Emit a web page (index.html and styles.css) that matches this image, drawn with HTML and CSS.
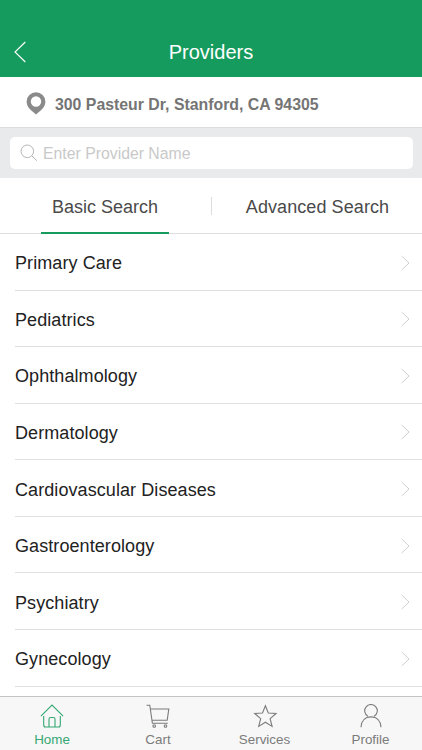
FILE: index.html
```html
<!DOCTYPE html>
<html lang="en">
<head>
<meta charset="utf-8">
<title>Providers</title>
<link rel="stylesheet" href="styles.css">
</head>
<body>
<div class="screen">
  <header class="header">
    <svg class="back" viewBox="0 0 12 22"><path d="M11.300 1 1 11l10.300 10"/></svg>
    <h1>Providers</h1>
  </header>
  <div class="address">
    <svg class="pin" viewBox="0 0 20 23"><path fill-rule="evenodd" d="M10 .3a9.400 9.400 0 0 0-9.400 9.400c0 3.300 1.700 6 4.200 8.200L10 22.600l5.200-4.700c2.500-2.200 4.200-4.900 4.200-8.200A9.400 9.400 0 0 0 10 .3ZM10 4.300a5.200 5.200 0 1 1 0 10.400 5.200 5.200 0 0 1 0-10.400Z"/></svg>
    <span>300 Pasteur Dr, Stanford, CA 94305</span>
  </div>
  <div class="search">
    <div class="field">
      <svg class="lens" viewBox="0 0 18 18"><circle cx="7.300" cy="7.300" r="6.300"/><path d="m11.900 11.900 5 4.800"/></svg>
      <span>Enter Provider Name</span>
    </div>
  </div>
  <nav class="tabs">
    <div class="tab"><span class="active">Basic Search</span></div>
    <div class="tab"><span>Advanced Search</span></div>
  </nav>
  <ul class="list">
    <li><span>Primary Care</span><svg class="chev" viewBox="0 0 9 16"><path d="m.7 1 7.300 7-7.300 7"/></svg></li>
    <li><span>Pediatrics</span><svg class="chev" viewBox="0 0 9 16"><path d="m.7 1 7.300 7-7.300 7"/></svg></li>
    <li><span>Ophthalmology</span><svg class="chev" viewBox="0 0 9 16"><path d="m.7 1 7.300 7-7.300 7"/></svg></li>
    <li><span>Dermatology</span><svg class="chev" viewBox="0 0 9 16"><path d="m.7 1 7.300 7-7.300 7"/></svg></li>
    <li><span>Cardiovascular Diseases</span><svg class="chev" viewBox="0 0 9 16"><path d="m.7 1 7.300 7-7.300 7"/></svg></li>
    <li><span>Gastroenterology</span><svg class="chev" viewBox="0 0 9 16"><path d="m.7 1 7.300 7-7.300 7"/></svg></li>
    <li><span>Psychiatry</span><svg class="chev" viewBox="0 0 9 16"><path d="m.7 1 7.300 7-7.300 7"/></svg></li>
    <li><span>Gynecology</span><svg class="chev" viewBox="0 0 9 16"><path d="m.7 1 7.300 7-7.300 7"/></svg></li>
  </ul>
  <footer class="bar">
    <div class="item current">
      <svg viewBox="0 0 24 24"><path d="M.9 12.100 12 1l11.100 11.100M3.700 12v9q0 2 2 2h12.600q2 0 2-2v-9M9 23v-8q0-1.500 1.500-1.500h3q1.500 0 1.500 1.500v8"/></svg>
      <span>Home</span>
    </div>
    <div class="item">
      <svg viewBox="0 0 24 24"><path d="M.5 1.200h3.300L6.400 19.300h15.400M4.500 5h18.300l-1.600 11.200H6.100"/><circle cx="8.200" cy="22" r="1.300"/><circle cx="19.500" cy="22" r="1.300"/></svg>
      <span>Cart</span>
    </div>
    <div class="item">
      <svg viewBox="0 0 24 24"><path d="m12.400 1.700 2.900 7.300 7.800.5-6 5.100 2 7.800-6.700-4.200-6.700 4.200 2-7.800-6-5.100 7.800-.5Z"/></svg>
      <span>Services</span>
    </div>
    <div class="item">
      <svg viewBox="0 0 24 24"><path d="M8.900 12.300a6.300 6.300 0 1 1 6.200 0M2 23.200c.3-6.400 4.200-10.300 10-10.300s9.700 3.900 10 10.300"/></svg>
      <span>Profile</span>
    </div>
  </footer>
</div>
</body>
</html>
```
FILE: styles.css
```css
* { box-sizing: border-box; }
body {
  margin: 0;
  background: #fff;
  font-family: "Liberation Sans", Arial, sans-serif;
}
svg { display: block; flex: none; fill: none; stroke: currentColor; }
.screen {
  width: 422px;
  height: 750px;
  display: flex;
  flex-direction: column;
  overflow: hidden;
}
.header {
  flex: none;
  height: 77px;
  padding: 27px 14px 0;
  display: grid;
  grid-template-columns: 12px 1fr 12px;
  align-items: center;
  background: #169b5e;
  color: #fff;
}
.header h1 {
  margin: 0;
  font-size: 20px;
  font-weight: 400;
  line-height: 24px;
  text-align: center;
}
.back { width: 12px; height: 22px; stroke-width: 1.1; }
.address {
  flex: none;
  height: 51px;
  padding: 5px 0 0 26px;
  display: flex;
  align-items: center;
  gap: 9px;
  border-bottom: 1px solid #dcdcde;
  color: #757575;
  font-size: 15.85px;
  font-weight: 700;
}
.pin { width: 20px; height: 23px; fill: #8a8a8a; stroke: none; margin-top: -3px; }
.address span { padding-top: 1px; }
.search {
  flex: none;
  height: 50px;
  padding: 9px 9px 9px 10px;
  background: #e9eaec;
}
.field {
  height: 32px;
  padding-left: 10px;
  display: flex;
  align-items: center;
  gap: 5px;
  border-radius: 5px;
  background: #fff;
  color: #c9c9c9;
  font-size: 15.8px;
}
.field span { padding-top: 2px; }
.lens { width: 18px; height: 18px; color: #b5b5b5; stroke-width: 1; }
.tabs {
  flex: none;
  height: 56px;
  display: grid;
  grid-template-columns: 210px 212px;
  border-bottom: 1px solid #dedede;
  color: #4a4a4a;
  font-size: 18px;
}
.tab { position: relative; display: flex; justify-content: center; }
.tab + .tab { padding-left: 3px; letter-spacing: .08px; }
.tab + .tab::before {
  content: "";
  position: absolute;
  left: 1px;
  top: 19px;
  width: 1px;
  height: 18px;
  background: #dcdcdc;
}
.tab span { height: 56px; padding: 0 10.5px; line-height: 58px; white-space: nowrap; }
.tab .active { border-bottom: 2px solid #169b5e; }
.list {
  flex: 1;
  min-height: 0;
  margin: 0;
  padding: 0 0 0 15px;
  list-style: none;
}
.list li {
  height: 56.57px;
  padding: 2px 12px 0 0;
  display: flex;
  align-items: center;
  justify-content: space-between;
  border-bottom: 1px solid #dfdfdf;
  color: #222;
  font-size: 18px;
  letter-spacing: .08px;
}
.list span { padding-top: 2px; }
.chev { width: 9px; height: 16px; color: #cfcfcf; stroke-width: 1; }
.bar {
  flex: none;
  height: 54px;
  display: grid;
  grid-template-columns: 104px 108px 105px 107px;
  border-top: 1px solid #c4c4c4;
  background: #f7f7f7;
  color: #7b7b7b;
}
.item {
  padding-top: 7px;
  display: flex;
  flex-direction: column;
  align-items: center;
  gap: 4px;
  font-size: 13.4px;
  line-height: 16px;
}
.item svg { width: 24px; height: 24px; stroke-width: 1.1; }
.current { color: #35a873; }
```
